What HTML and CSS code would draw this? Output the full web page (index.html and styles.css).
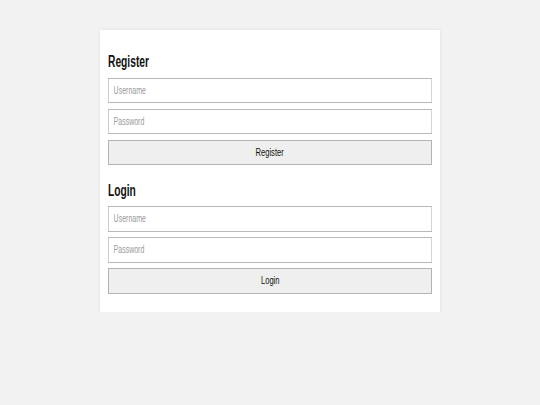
FILE: index.html
```html
<!DOCTYPE html>
<html>
<head>
<meta charset="utf-8">
<link rel="stylesheet" href="styles.css">
</head>
<body>
<main class="card">
  <section class="form">
    <h2 class="title"><span class="squeeze-h">Register</span></h2>
    <div class="field"><input class="input" type="text" placeholder="Username"></div>
    <div class="field"><input class="input" type="password" placeholder="Password"></div>
    <button class="btn"><span class="squeeze-b">Register</span></button>
  </section>
  <section class="form">
    <h2 class="title"><span class="squeeze-h">Login</span></h2>
    <div class="field"><input class="input" type="text" placeholder="Username"></div>
    <div class="field"><input class="input" type="password" placeholder="Password"></div>
    <button class="btn"><span class="squeeze-b">Login</span></button>
  </section>
</main>
</body>
</html>
```
FILE: styles.css
```css
html, body {
  margin: 0;
  padding: 0;
  background: #f2f2f2;
  font-family: "Liberation Sans", Arial, sans-serif;
}
body {
  padding-top: 30px;
}
.card {
  width: 340px;
  margin: 0 auto;
  box-sizing: border-box;
  background: #fff;
  padding: 23px 8px 18.5px;
  box-shadow: 0 0 4px rgba(0,0,0,0.08);
  display: flex;
  flex-direction: column;
  gap: 16.5px;
}
.form {
  display: flex;
  flex-direction: column;
  gap: 5.5px;
}
.title {
  margin: 0 0 1px;
  font-size: 16px;
  line-height: 18px;
  font-weight: bold;
  color: #111;
  white-space: nowrap;
}
.squeeze-h {
  display: inline-block;
  transform: scaleX(0.64);
  transform-origin: left center;
}
.field {
  height: 25.5px;
  overflow: hidden;
}
.input {
  display: block;
  width: calc(100% / 0.7);
  height: 25.5px;
  box-sizing: border-box;
  margin: 0;
  border-style: solid;
  border-color: #b9b9b9;
  border-width: 1px 1.43px;
  background: #fff;
  padding: 0 0 0 7px;
  font-family: "Liberation Sans", Arial, sans-serif;
  font-size: 10px;
  color: #222;
  outline: none;
  transform: scaleX(0.7);
  transform-origin: left center;
}
.input::placeholder {
  color: #999999;
}
.btn {
  height: 25.5px;
  margin: 0;
  padding: 0;
  border: 1px solid #b4b4b4;
  background: #efefef;
  font-family: "Liberation Sans", Arial, sans-serif;
  font-size: 10px;
  color: #111;
  white-space: nowrap;
}
.squeeze-b {
  display: inline-block;
  transform: scaleX(0.76);
}
```
